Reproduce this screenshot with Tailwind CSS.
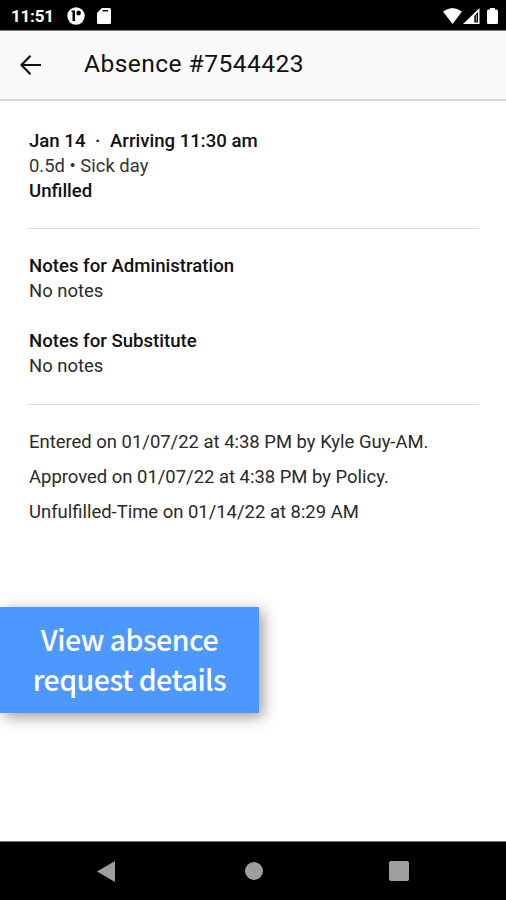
<!DOCTYPE html>
<html lang="en">
<head>
<meta charset="utf-8">
<title>Absence #7544423</title>
<script src="https://cdn.jsdelivr.net/npm/@tailwindcss/browser@4"></script>
</head>
<body class="bg-white">
<div class="relative flex h-[900px] w-[506px] flex-col overflow-hidden bg-white font-[Roboto,sans-serif] text-[#111]">
  <div class="flex h-[30px] shrink-0 items-center bg-black pt-[2px] pl-[11px] pr-[8px] text-white">
    <span class="w-[56px] text-[17px] leading-none font-bold tracking-[-0.2px]">11:51</span>
    <svg class="h-[18px] w-[18px]" viewBox="0 0 18 18"><circle cx="9" cy="9" r="8.700" fill="#fff"/><path d="M4.500 3.500H8v10.500H5.500V5H4.500z" fill="#000"/><rect x="9.500" y="3.800" width="4.200" height="4.500" rx="1.500" fill="#000"/></svg>
    <svg class="ml-[12px] h-[16px] w-[14px]" viewBox="0 0 14 16"><path d="M5 0h7.500Q14 0 14 1.500V14.500Q14 16 12.500 16H1.500Q0 16 0 14.500V5z" fill="#fff"/><path d="M5.500 2.700h5.500" stroke="#000" stroke-width="1.500"/></svg>
    <svg class="ml-auto h-[16px] w-[19px]" viewBox="0 0 19 16"><path d="M0 3.500Q9.500-3.500 19 3.500L9.500 16z" fill="#fff"/></svg>
    <svg class="ml-[1px] h-[16px] w-[17px]" viewBox="0 0 17 16"><path d="M0 16L16.500 0V16z" fill="#fff"/><path d="M11.300 8l3.700-4v10.500h-3.700z" fill="#000"/><path d="M13.300 7v6.500" stroke="#fff" stroke-width=".7"/></svg>
    <svg class="ml-[7px] h-[16px] w-[11px]" viewBox="0 0 11 16"><path d="M3 0h5v1.500h1.500Q11 1.500 11 3v11.500Q11 16 9.500 16h-8Q0 16 0 14.500V3Q0 1.500 1.500 1.500H3z" fill="#fff"/></svg>
  </div>
  <header class="flex h-[69px] shrink-0 items-center border-t border-[#777] bg-[#fafafa] pb-[1px] pl-[20px] shadow-[0_2px_1px_#d6d6d6]">
    <svg class="h-[20px] w-[21px]" viewBox="0 0 21 20" fill="none" stroke="#111" stroke-width="2.200"><path d="M21 10H1.500M10.500.800L1.500 10l9 9.200"/></svg>
    <h1 class="ml-[43px] text-[24.6px] leading-none tracking-[0.43px] whitespace-nowrap">Absence #7544423</h1>
  </header>
  <main class="flex-1 pt-[30px] pr-[27px] pl-[29px] text-[18.45px] leading-[25px] whitespace-nowrap">
    <section class="h-[100px] border-b border-[#ddd]">
      <p class="text-[18.6px] font-medium">Jan 14 <span class="mx-[5px]">·</span> Arriving 11:30 am</p>
      <p class="text-[#333]">0.5d • Sick day</p>
      <p class="text-[18.6px] font-medium">Unfilled</p>
    </section>
    <section class="h-[176px] border-b border-[#ddd] pt-[25px]">
      <h2 class="text-[18.6px] font-medium">Notes for Administration</h2>
      <p class="text-[#2a2a2a]">No notes</p>
      <h2 class="mt-[25px] text-[18.6px] font-medium">Notes for Substitute</h2>
      <p class="text-[#2a2a2a]">No notes</p>
    </section>
    <section class="pt-[20px] leading-[35px] text-[#2a2a2a]">
      <p>Entered on 01/07/22 at 4:38 PM by Kyle Guy-AM.</p>
      <p>Approved on 01/07/22 at 4:38 PM by Policy.</p>
      <p>Unfulfilled-Time on 01/14/22 at 8:29 AM</p>
    </section>
  </main>
  <nav class="flex h-[59px] shrink-0 items-center border-t border-[#777] bg-black">
    <svg class="ml-[97px] h-[21px] w-[18px]" viewBox="0 0 18 21"><path d="M18 0v21L0 10.500z" fill="#9e9e9e"/></svg>
    <div class="ml-[130px] h-[18px] w-[18px] rounded-full bg-[#9e9e9e]"></div>
    <div class="ml-[126px] h-[20px] w-[20px] rounded-[2px] bg-[#9e9e9e]"></div>
  </nav>
  <aside class="absolute top-[607px] left-0 h-[106px] w-[259px] bg-[#4d98ff] pt-[12px] text-center font-['Noto_Sans_CJK_JP',sans-serif] text-[28.5px] leading-[40px] font-medium tracking-[-0.5px] whitespace-nowrap text-white shadow-[4px_4px_14px_rgba(0,0,0,0.4)]">View absence<br>request details</aside>
</div>
</body>
</html>
